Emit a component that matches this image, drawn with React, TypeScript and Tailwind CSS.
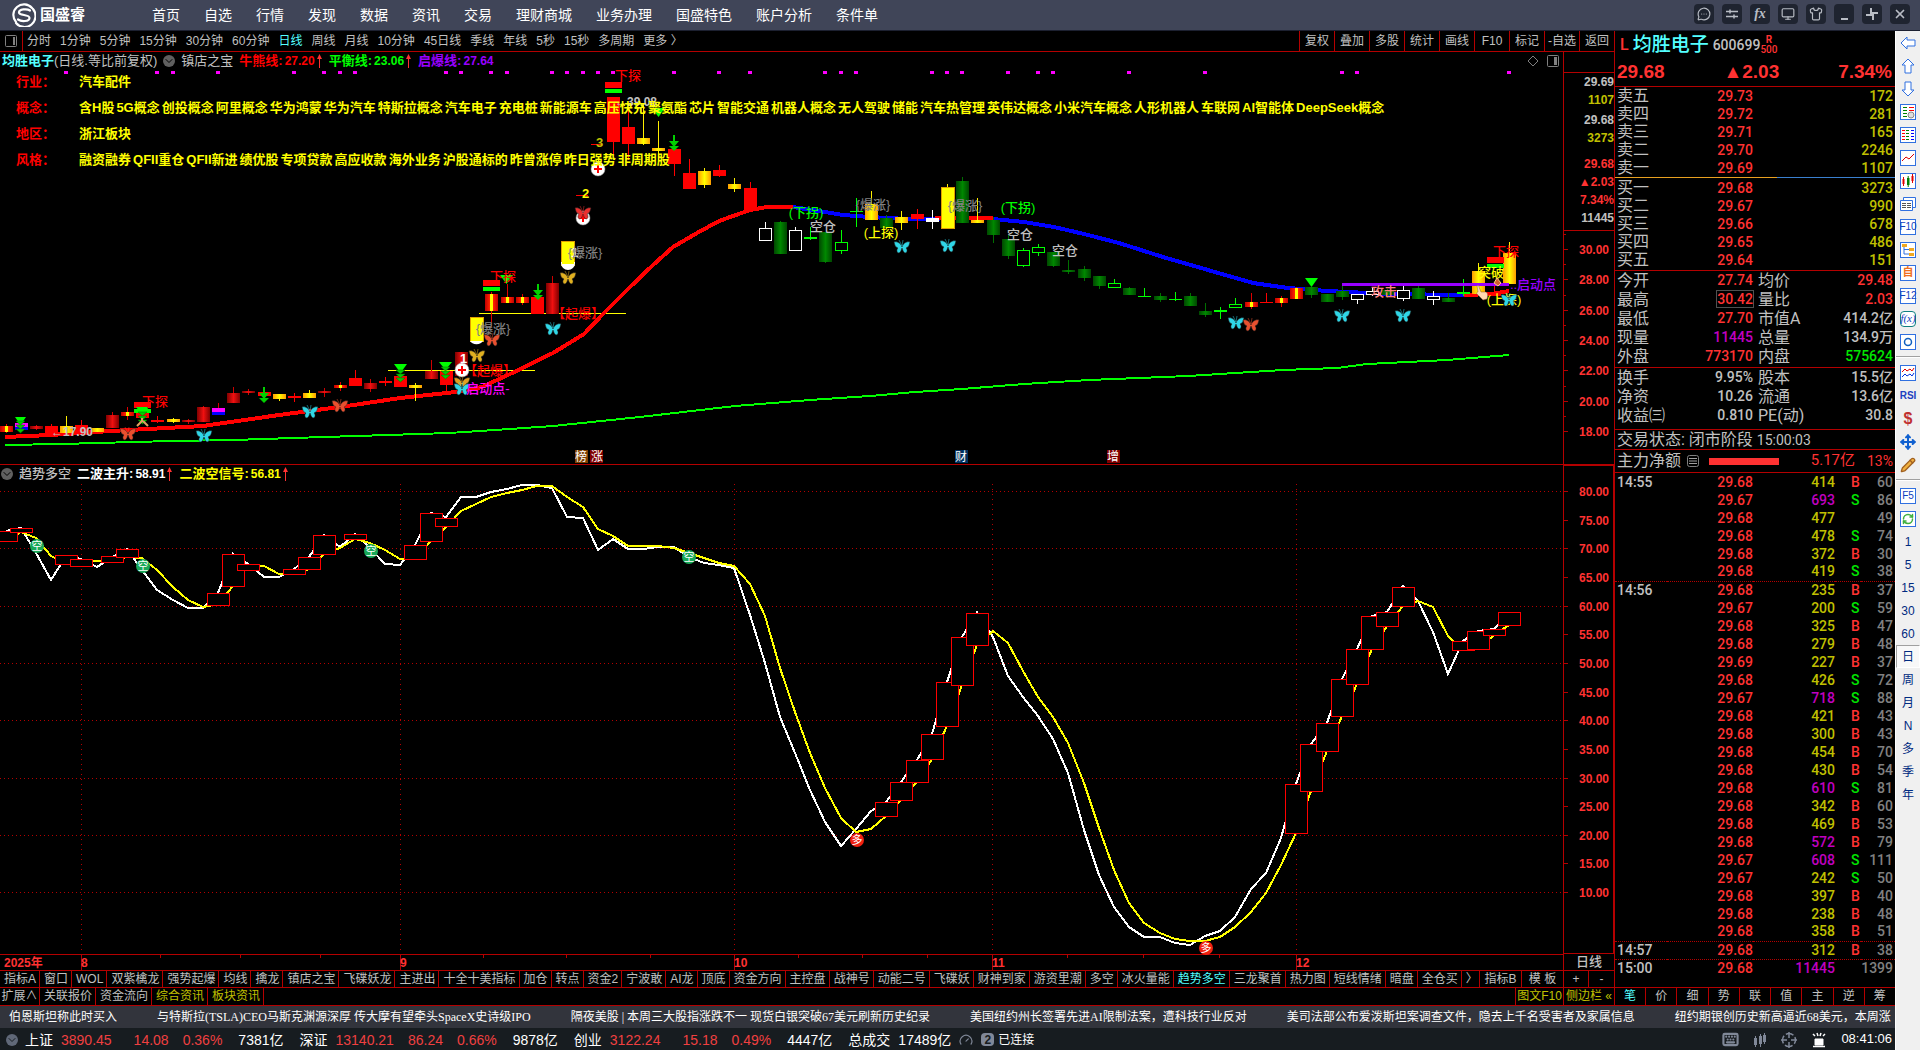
import React, { useState } from "react";
import clsx from "clsx";
import { ChevronDown, MessageCircleMore, Monitor, Shirt, X, Keyboard, Gauge, RefreshCw, Move, Pencil } from "lucide-react";

type CandleKind = "r" | "d" | "y" | "b" | "s" | "g" | "G" | "h" | "w" | "W" | "m";
// index, kind, high, body top, body bottom, low
type Candle = [number, CandleKind, number, number, number, number];

interface Tick {
  time?: string;
  price: string;
  vol: string;
  side: string;
  count: string;
  big?: boolean;
}

interface Note {
  x: number;
  y: number;
  text: string;
  color: string;
}

const STEP = 15.185;
const px = (i: number) => Math.round(5.5 + i * STEP);

const menu = ["首页", "自选", "行情", "发现", "数据", "资讯", "交易", "理财商城", "业务办理", "国盛特色", "账户分析", "条件单"];
const periods = ["分时", "1分钟", "5分钟", "15分钟", "30分钟", "60分钟", "日线", "周线", "月线", "10分钟", "45日线", "季线", "年线", "5秒", "15秒", "多周期", "更多 〉"];
const chartTools = ["复权", "叠加", "多股", "统计", "画线", "F10", "标记", "-自选", "返回"];
const indicators = ["指标A", "窗口", "WOL", "双紫檎龙", "强势起爆", "均线", "擒龙", "镇店之宝", "飞碟妖龙", "主进出", "十全十美指标", "加仓", "转点", "资金2", "宁波敢", "AI龙", "顶底", "资金方向", "主控盘", "战神号", "动能二号", "飞碟妖", "财神到家", "游资里潮", "多空", "冰火量能", "趋势多空", "三龙聚首", "热力图", "短线情绪", "暗盘", "全仓买", "〉"];
const panelTabs = ["笔", "价", "细", "势", "联", "值", "主", "逆", "筹"];

const facts = [
  { label: "行业：", value: "汽车配件" },
  { label: "概念：", value: "含H股 5G概念 创投概念 阿里概念 华为鸿蒙 华为汽车 特斯拉概念 汽车电子 充电桩 新能源车 高压快充 聚氨酯 芯片 智能交通 机器人概念 无人驾驶 储能 汽车热管理 英伟达概念 小米汽车概念 人形机器人 车联网 AI智能体 DeepSeek概念" },
  { label: "地区：", value: "浙江板块" },
  { label: "风格：", value: "融资融券 QFII重仓 QFII新进 绩优股 专项贷款 高应收款 海外业务 沪股通标的 昨曾涨停 昨日强势 非周期股" },
];

const news = [
  "伯恩斯坦称此时买入",
  "与特斯拉(TSLA)CEO马斯克渊源深厚 传大摩有望牵头SpaceX史诗级IPO",
  "隔夜美股 | 本周三大股指涨跌不一 现货白银突破67美元刷新历史纪录",
  "美国纽约州长签署先进AI限制法案，遭科技行业反对",
  "美司法部公布爱泼斯坦案调查文件，隐去上千名受害者及家属信息",
  "纽约期银创历史新高逼近68美元，本周涨",
];

const asks = [["卖五", "29.73", "172"], ["卖四", "29.72", "281"], ["卖三", "29.71", "165"], ["卖二", "29.70", "2246"], ["卖一", "29.69", "1107"]];
const bids = [["买一", "29.68", "3273"], ["买二", "29.67", "990"], ["买三", "29.66", "678"], ["买四", "29.65", "486"], ["买五", "29.64", "151"]];

const RED = "text-[#ff3232]";
const GRAY = "text-[#c0c0c0]";
const PUR = "text-[#c000c0]";

const stats = [
  ["今开", "27.74", RED, "均价", "29.48", RED],
  ["最高", "30.42", RED, "量比", "2.03", RED],
  ["最低", "27.70", RED, "市值A", "414.2亿", GRAY],
  ["现量", "11445", PUR, "总量", "134.9万", GRAY],
  ["外盘", "773170", RED, "内盘", "575624", "text-[#00e600]"],
];
const stats2 = [
  ["换手", "9.95%", GRAY, "股本", "15.5亿", GRAY],
  ["净资", "10.26", GRAY, "流通", "13.6亿", GRAY],
  ["收益㈢", "0.810", GRAY, "PE(动)", "30.8", GRAY],
];

const ticks: Tick[] = [
  { time: "14:55", price: "29.68", vol: "414", side: "B", count: "60" },
  { price: "29.67", vol: "693", side: "S", count: "86", big: true },
  { price: "29.68", vol: "477", side: "", count: "49" },
  { price: "29.68", vol: "478", side: "S", count: "74" },
  { price: "29.68", vol: "372", side: "B", count: "30" },
  { price: "29.68", vol: "419", side: "S", count: "38" },
  { time: "14:56", price: "29.68", vol: "235", side: "B", count: "37" },
  { price: "29.67", vol: "200", side: "S", count: "59" },
  { price: "29.68", vol: "325", side: "B", count: "47" },
  { price: "29.68", vol: "279", side: "B", count: "48" },
  { price: "29.69", vol: "227", side: "B", count: "37" },
  { price: "29.68", vol: "426", side: "S", count: "72" },
  { price: "29.67", vol: "718", side: "S", count: "88", big: true },
  { price: "29.68", vol: "421", side: "B", count: "43" },
  { price: "29.68", vol: "300", side: "B", count: "43" },
  { price: "29.68", vol: "454", side: "B", count: "70" },
  { price: "29.68", vol: "430", side: "B", count: "54" },
  { price: "29.68", vol: "610", side: "S", count: "81", big: true },
  { price: "29.68", vol: "342", side: "B", count: "60" },
  { price: "29.68", vol: "469", side: "B", count: "53" },
  { price: "29.68", vol: "572", side: "B", count: "79", big: true },
  { price: "29.67", vol: "608", side: "S", count: "111", big: true },
  { price: "29.67", vol: "242", side: "S", count: "50" },
  { price: "29.68", vol: "397", side: "B", count: "40" },
  { price: "29.68", vol: "238", side: "B", count: "48" },
  { price: "29.68", vol: "358", side: "B", count: "51" },
  { time: "14:57", price: "29.68", vol: "312", side: "B", count: "38" },
  { time: "15:00", price: "29.68", vol: "11445", side: "", count: "1399", big: true },
];

const indexes = [
  { name: "上证", value: "3890.45", diff: "14.08", pct: "0.36%", amount: "7381亿" },
  { name: "深证", value: "13140.21", diff: "86.24", pct: "0.66%", amount: "9878亿" },
  { name: "创业", value: "3122.24", diff: "15.18", pct: "0.49%", amount: "4447亿" },
];

const candles: Candle[] = [
  [0, "s", 424, 426, 432, 433], [1, "m", 423, 423, 430, 430], [2, "d", 425, 426, 429, 430], [3, "r", 424, 426, 433, 433],
  [4, "y", 416, 426, 433, 433], [5, "r", 420, 425, 432, 432], [6, "y", 428, 428, 432, 432], [7, "d", 412, 415, 428, 428],
  [8, "s", 407, 412, 416, 420], [9, "r", 410, 410, 418, 418], [10, "r", 416, 420, 422, 423], [11, "y", 418, 419, 422, 423],
  [12, "d", 419, 420, 422, 424], [13, "d", 406, 407, 422, 422], [14, "m", 403, 408, 415, 415], [15, "d", 387, 393, 403, 403],
  [16, "d", 389, 391, 393, 395], [17, "r", 387, 392, 396, 400], [18, "y", 394, 394, 399, 401], [19, "r", 393, 396, 398, 402],
  [20, "y", 390, 393, 398, 398], [21, "d", 388, 391, 393, 397], [22, "s", 382, 385, 388, 391], [23, "r", 370, 378, 386, 386],
  [24, "d", 379, 383, 389, 392], [25, "r", 377, 381, 383, 386], [26, "r", 376, 376, 387, 387], [27, "y", 383, 385, 388, 401],
  [28, "d", 360, 371, 379, 379], [29, "r", 371, 371, 385, 393], [30, "d", 352, 352, 376, 376], [31, "b", 317, 317, 341, 344],
  [32, "s", 292, 294, 311, 327], [33, "s", 284, 297, 303, 303], [34, "s", 294, 297, 303, 305], [35, "r", 297, 297, 314, 314],
  [36, "d", 276, 283, 314, 314], [37, "b", 241, 241, 265, 265], [40, "r", 97, 97, 142, 157], [41, "r", 110, 127, 144, 160],
  [42, "y", 103, 138, 144, 145], [43, "y", 121, 148, 151, 160], [44, "r", 149, 149, 164, 176], [45, "r", 159, 173, 189, 189],
  [46, "y", 168, 171, 185, 188], [47, "r", 165, 170, 176, 177], [48, "y", 178, 184, 189, 192], [49, "r", 182, 188, 210, 210],
  [50, "w", 222, 228, 240, 241], [51, "g", 221, 222, 254, 254], [52, "w", 227, 230, 250, 250], [53, "G", 227, 237, 239, 240],
  [54, "g", 232, 232, 262, 263], [55, "h", 230, 242, 250, 254], [56, "G", 198, 211, 212, 227], [57, "y", 191, 204, 220, 220],
  [58, "g", 215, 218, 228, 228], [59, "y", 211, 217, 223, 230], [60, "r", 209, 214, 219, 229], [61, "W", 210, 218, 222, 229],
  [62, "b", 184, 187, 228, 229], [63, "g", 177, 181, 223, 223], [64, "y", 198, 220, 223, 223], [65, "g", 217, 220, 235, 243],
  [66, "g", 235, 239, 256, 259], [67, "h", 248, 250, 265, 267], [68, "h", 244, 247, 252, 256], [69, "g", 252, 252, 266, 267],
  [70, "g", 260, 270, 272, 274], [71, "g", 266, 269, 278, 281], [72, "g", 276, 276, 286, 289], [73, "h", 279, 283, 287, 288],
  [74, "g", 287, 288, 295, 295], [75, "G", 288, 296, 297, 297], [76, "g", 293, 296, 300, 302], [77, "G", 292, 299, 300, 301],
  [78, "g", 293, 296, 306, 306], [79, "g", 303, 311, 315, 317], [80, "G", 307, 310, 312, 319], [81, "h", 298, 304, 307, 307],
  [82, "s", 293, 302, 307, 309], [83, "r", 293, 302, 303, 303], [84, "s", 296, 298, 303, 307], [85, "s", 287, 288, 299, 299],
  [86, "g", 287, 287, 295, 298], [87, "g", 294, 294, 302, 302], [88, "g", 286, 291, 297, 300], [89, "w", 294, 294, 299, 304],
  [90, "w", 288, 291, 294, 296], [91, "g", 289, 290, 295, 298], [92, "w", 286, 290, 298, 301], [93, "g", 286, 288, 299, 299],
  [94, "w", 291, 296, 299, 305], [95, "g", 293, 298, 302, 302], [96, "G", 279, 292, 294, 296], [97, "y", 263, 271, 294, 294],
  [98, "r", 286, 293, 296, 296], [99, "y", 242, 253, 284, 284],
];

const magentaDots = [4, 10, 11, 14, 19, 21, 22, 23, 29, 30, 32, 33, 36, 37, 38, 39, 40, 44, 47, 49, 54, 55, 56, 61, 62, 63, 66, 68, 69, 74, 79, 88, 89, 99];

const butterflies = [
  { x: 128, y: 434, c: "#e8502f" }, { x: 204, y: 436, c: "#2fd6e6" }, { x: 310, y: 412, c: "#2fd6e6" }, { x: 340, y: 406, c: "#e8502f" },
  { x: 462, y: 383, c: "#e0a020" }, { x: 462, y: 389, c: "#2fd6e6" }, { x: 477, y: 356, c: "#e0b020" }, { x: 492, y: 340, c: "#e8502f" },
  { x: 553, y: 329, c: "#2fd6e6" }, { x: 568, y: 278, c: "#e0b020" }, { x: 902, y: 247, c: "#2fd6e6" }, { x: 948, y: 246, c: "#2fd6e6" },
  { x: 1236, y: 323, c: "#2fd6e6" }, { x: 1251, y: 325, c: "#e8502f" }, { x: 1342, y: 316, c: "#2fd6e6" }, { x: 1403, y: 316, c: "#2fd6e6" },
];

const notes: Note[] = [
  { x: 155, y: 401, text: "下探", color: "#ff0000" },
  { x: 490, y: 370, text: "【起爆】", color: "#ff0000" },
  { x: 578, y: 313, text: "【起爆】", color: "#ff0000" },
  { x: 488, y: 388, text: "启动点-", color: "#ff00ff" },
  { x: 493, y: 328, text: "{爆涨}", color: "#808080" },
  { x: 585, y: 252, text: "{爆涨}", color: "#808080" },
  { x: 503, y: 276, text: "下探", color: "#ff0000" },
  { x: 806, y: 212, text: "(下拐)", color: "#00ff00" },
  { x: 823, y: 226, text: "空仓", color: "#c0c0c0" },
  { x: 873, y: 204, text: "{爆涨}", color: "#808080" },
  { x: 881, y: 232, text: "(上探)", color: "#ffff00" },
  { x: 965, y: 205, text: "{爆涨}", color: "#808080" },
  { x: 1018, y: 207, text: "(下拐)", color: "#00ff00" },
  { x: 1020, y: 234, text: "空仓", color: "#c0c0c0" },
  { x: 1065, y: 250, text: "空仓", color: "#c0c0c0" },
  { x: 1384, y: 291, text: "攻击", color: "#ff8080" },
  { x: 1506, y: 251, text: "下探", color: "#ff0000" },
  { x: 1491, y: 272, text: "突破", color: "#ffff00" },
  { x: 1533, y: 284, text: "..启动点", color: "#9900ff" },
  { x: 1504, y: 299, text: "(上探)", color: "#ffff00" },
];

const whiteLine = [531, 528, 553, 580, 556, 559, 567, 557, 549, 570, 590, 600, 608, 608, 593, 554, 564, 577, 577, 569, 557, 535, 547, 534, 548, 564, 565, 545, 513, 517, 497, 497, 492, 489, 485, 485, 488, 517, 518, 550, 539, 549, 549, 547, 547, 557, 563, 565, 568, 615, 663, 717, 753, 790, 822, 846, 829, 811, 802, 782, 760, 734, 682, 637, 612, 637, 676, 697, 716, 739, 773, 830, 875, 907, 927, 937, 937, 943, 945, 936, 931, 917, 889, 873, 838, 784, 744, 723, 679, 649, 616, 612, 586, 601, 632, 674, 641, 631, 629, 612];
const yellowLine = [541, 532, 538, 556, 564, 562, 561, 561, 557, 558, 570, 587, 600, 607, 604, 586, 566, 566, 574, 574, 569, 554, 548, 539, 543, 550, 559, 559, 541, 527, 511, 504, 497, 493, 490, 486, 486, 497, 507, 529, 536, 546, 546, 546, 548, 553, 558, 563, 566, 584, 616, 668, 712, 753, 788, 818, 832, 829, 816, 800, 782, 759, 726, 685, 645, 631, 643, 671, 697, 717, 743, 783, 828, 870, 903, 923, 933, 939, 941, 941, 937, 927, 912, 893, 865, 833, 791, 751, 716, 684, 649, 626, 606, 601, 607, 636, 650, 649, 635, 625];
const boxes = [[0, 531, 541], [1, 528, 532], [4, 555, 564], [5, 559, 566], [7, 556, 562], [8, 549, 557], [14, 593, 605], [15, 554, 586], [16, 564, 570], [19, 569, 574], [20, 557, 569], [21, 535, 554], [23, 534, 539], [27, 545, 559], [28, 513, 541], [29, 518, 526], [58, 802, 816], [59, 782, 800], [60, 760, 782], [61, 734, 759], [62, 682, 726], [63, 637, 685], [64, 613, 645], [85, 784, 833], [86, 744, 791], [87, 723, 751], [88, 679, 716], [89, 649, 684], [90, 616, 649], [91, 612, 626], [92, 587, 606], [96, 641, 650], [97, 631, 649], [98, 629, 635], [99, 612, 625]];

const months = [{ x: 81, label: "8" }, { x: 400, label: "9" }, { x: 734, label: "10" }, { x: 992, label: "11" }, { x: 1296, label: "12" }];
const minorTicks = [160, 240, 320, 483, 566, 650, 798, 862, 927, 1067, 1143, 1219];

const toLine = (ys: number[]) => ys.map((y, i) => `${px(i)},${y}`).join(" ");

function CandleShape({ c }: { c: Candle }) {
  const [i, kind, high, top, bottom, low] = c;
  const x = px(i);
  const left = x - 6;
  const h = Math.max(bottom - top, 1);
  const wick: Record<CandleKind, string> = { r: "#ff0000", d: "#d00000", y: "#ffee00", b: "#ffee00", s: "#e00000", g: "#007000", G: "#00ff00", h: "#00ff00", w: "#fff", W: "#fff", m: "#d00000" };
  return (
    <g>
      <rect x={x} y={high} width={1} height={low - high} fill={wick[kind]} />
      {kind === "r" && <rect x={left} y={top} width={13} height={h} fill="#ff0000" />}
      {kind === "d" && <rect x={left} y={top} width={13} height={h} fill="url(#darkRed)" />}
      {kind === "y" && <rect x={left} y={top} width={13} height={h} fill="url(#gold)" />}
      {kind === "b" && <rect x={left} y={top} width={13} height={h} fill="#ffff00" stroke="#e0a000" strokeWidth={1} />}
      {kind === "s" && <rect x={left} y={top} width={13} height={h} fill="url(#stripe)" />}
      {kind === "g" && <rect x={left} y={top} width={13} height={h} fill="url(#darkGreen)" />}
      {kind === "G" && <rect x={left} y={top} width={13} height={h} fill="#00ff00" />}
      {kind === "W" && <rect x={left} y={top} width={13} height={h} fill="#ffffff" />}
      {(kind === "h" || kind === "w") && (
        <rect x={left} y={top} width={12} height={h} fill="#000" stroke={kind === "h" ? "#00ff00" : "#ffffff"} />
      )}
      {kind === "m" && (
        <>
          <rect x={left} y={top} width={13} height={h} fill="#ff00ff" />
          <rect x={left} y={top + h * 0.6} width={13} height={h * 0.4} fill="#0000ff" />
        </>
      )}
    </g>
  );
}

function Butterfly({ x, y, c }: { x: number; y: number; c: string }) {
  return (
    <g transform={`translate(${x} ${y})`} stroke="#222" strokeWidth={0.5}>
      <path fill={c} d="M0 0C-1-3-4-6-8-5C-7-2-7 0-4 1C-6 3-5 6-3 6C-1 5-1 3 0 1C1 3 1 5 3 6C5 6 6 3 4 1C7 0 7-2 8-5C4-6 1-3 0 0Z" />
      <path fill="none" stroke={c} d="M0-1L-3-7M0-1L1-7" />
    </g>
  );
}

function DownArrows({ x, y }: { x: number; y: number }) {
  return (
    <g fill="#00d000" stroke="#007000" strokeWidth={0.5}>
      <path d={`M${x - 4} ${y}h9l-4.500 4z`} />
      <path d={`M${x - 4} ${y + 4}h9l-4.500 4z`} />
      <path d={`M${x - 4} ${y + 8}h9l-4.500 4z`} />
    </g>
  );
}

function StemArrow({ x, y }: { x: number; y: number }) {
  return (
    <g fill="#00d000">
      <rect x={x} y={y} width={2} height={8} />
      <path d={`M${x - 4} ${y + 6}h10l-5 6z`} />
      <path d={`M${x - 4} ${y + 11}h10l-5 5z`} />
    </g>
  );
}

function CrossBall({ x, y }: { x: number; y: number }) {
  return (
    <g>
      <circle cx={x} cy={y} r={7} fill="#fff" stroke="#999" strokeWidth={0.5} />
      <path d={`M${x - 4} ${y}h8M${x} ${y - 4}v8`} stroke="#ff0000" strokeWidth={2} />
    </g>
  );
}

function Hat({ x, y }: { x: number; y: number }) {
  return (
    <>
      <rect x={x - 8} y={y} width={17} height={6} fill="#ff0000" />
      <rect x={x - 8} y={y + 7} width={17} height={4} fill="#00ff00" />
    </>
  );
}

function PriceChart() {
  return (
    <svg viewBox="0 69 1563 395" className="block h-auto w-full" role="img" aria-label="均胜电子 日线">
      <defs>
        <linearGradient id="darkRed"><stop offset="0" stopColor="#800000" /><stop offset="0.5" stopColor="#f01010" /><stop offset="1" stopColor="#800000" /></linearGradient>
        <linearGradient id="gold"><stop offset="0" stopColor="#ff9c00" /><stop offset="0.5" stopColor="#ffff00" /><stop offset="1" stopColor="#ff9c00" /></linearGradient>
        <linearGradient id="darkGreen"><stop offset="0" stopColor="#004800" /><stop offset="0.5" stopColor="#008800" /><stop offset="1" stopColor="#004800" /></linearGradient>
        <linearGradient id="stripe"><stop offset="0" stopColor="#c00000" /><stop offset="0.35" stopColor="#ff2000" /><stop offset="0.36" stopColor="#ffff00" /><stop offset="0.64" stopColor="#ffff00" /><stop offset="0.65" stopColor="#ff2000" /><stop offset="1" stopColor="#c00000" /></linearGradient>
      </defs>
      <g shapeRendering="crispEdges">
        {magentaDots.map((i) => <rect key={i} x={px(i) - 2} y={71} width={4} height={3} fill="#ff00ff" />)}
        <rect x={388} y={370} width={147} height={1} fill="#ffff00" />
        <rect x={479} y={313} width={147} height={1} fill="#ffff00" />
        <polyline fill="none" stroke="#00ff00" strokeWidth={2} points="5,445 61,444 171,441 233,440 324,437 388,435 449,433 510,429 553,426 640,417 735,406 810,400 840,398 870,396 915,392 962,389 1024,384 1089,380 1188,376 1283,370 1337,368 1367,364 1447,360 1509,355" />
        <g fill="none" strokeWidth={4}>
          <polyline stroke="#ff0000" points="5,437 51,435 111,431 203,426 279,415 347,406 400,398 456,392 482,387 508,375 553,353 584,334 603,314 627,290 653,265 673,247 697,233 719,221 750,210 767,207 793,207" />
          <polyline stroke="#0000ff" points="793,207 825,212 843,215 870,217 907,219 940,219" />
          <polyline stroke="#ff0000" points="935,218 993,218" />
          <polyline stroke="#0000ff" points="993,219 1024,222 1054,227 1084,234 1119,243 1163,257 1208,270 1253,283 1288,288 1328,291 1387,294 1464,295" />
          <polyline stroke="#ff0000" points="1464,295 1492,294 1509,291" />
        </g>
        {candles.map((c) => <CandleShape key={c[0]} c={c} />)}
        <rect x={1342} y={283} width={167} height={3} fill="#9900ff" />
        <rect x={576} y={195} width={12} height={1} fill="#ff0000" />
        <rect x={591} y={144} width={12} height={1} fill="#ff0000" />
      </g>

      <CrossBall x={462} y={370} />
      <path d="M470 341a7 5 0 0 0 13 0z" fill="#fff" />
      <path d="M561 263a7 7 0 0 0 14 0v-1h-14z" fill="#fff" />
      <rect x={562} y={242} width={12} height={22} fill="#ffff00" />
      <text x={571} y={257} fill="#fff" fontSize={13} fontWeight={700}>1</text>
      <CrossBall x={583} y={218} />
      <Butterfly x={583} y={213} c="#e8302f" />
      <CrossBall x={598} y={169} />
      <Hat x={142} y={402} />
      <Hat x={491} y={280} />
      <Hat x={613} y={82} />
      <Hat x={1495} y={257} />

      <g fill="#00ff00">
        <path d="M15 417h11l-5.500 8z" />
        <path d="M136 407h13l-6.500 8z" />
        <path d="M394 364h13l-6.500 9z" />
        <path d="M439 362h13l-6.500 8z" />
        <path d="M500 275h13l-6.500 9z" />
        <path d="M652 108h13l-6.500 9z" />
        <path d="M1305 278h13l-6.500 9z" />
      </g>
      <DownArrows x={20} y={421} />
      <DownArrows x={142} y={412} />
      <DownArrows x={400} y={370} />
      <DownArrows x={445} y={367} />
      <StemArrow x={263} y={387} />
      <StemArrow x={537} y={284} />
      <StemArrow x={673} y={135} />
      <path d="M142 421l-5 5M143 421l5 5M142 418v4" stroke="#e0a060" strokeWidth={2} />

      {butterflies.map((b) => <Butterfly key={`${b.x}-${b.y}`} {...b} />)}

      <g fontSize={13} fontWeight={500} textAnchor="middle" dominantBaseline="central">
        {notes.map((n) => <text key={`${n.x}-${n.y}`} x={n.x} y={n.y} fill={n.color}>{n.text}</text>)}
        <text x={628} y={75} fill="#ff0000">下探</text>
      </g>
      <g fontSize={12} fontWeight={700} dominantBaseline="central">
        <text x={51} y={432} fill="#c0c0c0">←17.90</text>
        <text x={615} y={102} fill="#c0c0c0">←39.08</text>
        <text x={460} y={358} fill="#fff" fontSize={13}>1</text>
        <text x={582} y={193} fill="#ffff00" fontSize={13}>2</text>
        <text x={596} y={142} fill="#c0c000" fontSize={13}>3</text>
      </g>
      <path d="M1494 283l3-5 4 5-3 3z" fill="#d06030" stroke="#ffcc80" />
      <Butterfly x={1509} y={300} c="#2fd6e6" />
      {/* pointing hand */}
      <path d="M1477 286c1-1 2 0 2 1l2 5 5 0c2 1 2 4 1 7l-4 1-6-6c-1-1 0-2 1-2z" fill="#ffd8b0" stroke="#8a5a30" strokeWidth={0.5} />

      <g fontSize={12} textAnchor="middle" dominantBaseline="central">
        <rect x={575} y={450} width={13} height={13} fill="#804000" /><text x={581} y={457} fill="#fff">榜</text>
        <rect x={590} y={450} width={13} height={13} fill="#800000" /><text x={597} y={457} fill="#fff">涨</text>
        <rect x={955} y={450} width={13} height={13} fill="#003060" /><text x={961} y={457} fill="#fff">财</text>
        <rect x={1107} y={450} width={13} height={13} fill="#800000" /><text x={1113} y={457} fill="#fff">增</text>
      </g>
    </svg>
  );
}

function TrendChart() {
  const grid = [80, 70, 60, 50, 40, 30, 20, 10];
  return (
    <svg viewBox="0 482 1563 488" className="block h-auto w-full" role="img" aria-label="趋势多空">
      <g shapeRendering="crispEdges" fill="none">
        {grid.map((g) => {
          const y = Math.round(491 + (80 - g) * 5.73) + 0.5;
          return <line key={g} x1={0} x2={1563} y1={y} y2={y} stroke="#b40000" strokeDasharray="1 3" />;
        })}
        {months.map((m) => <line key={m.x} x1={m.x + 0.5} x2={m.x + 0.5} y1={484} y2={954} stroke="#b40000" strokeDasharray="1 4" />)}
        <polyline points={toLine(whiteLine)} stroke="#ffffff" strokeWidth={2} />
        <polyline points={toLine(yellowLine)} stroke="#ffff00" strokeWidth={2} />
        {boxes.map(([i, top, bottom]) => (
          <rect key={i} x={px(i) - 10.5} y={top + 0.5} width={22} height={bottom - top} fill="#000" stroke="#ff0000" />
        ))}
        <rect x={0} y={954} width={1563} height={1} fill="#b40000" />
        {minorTicks.map((x) => <rect key={x} x={x} y={955} width={1} height={3} fill="#b40000" />)}
        {months.map((m) => <rect key={m.x} x={m.x} y={955} width={1} height={15} fill="#b40000" />)}
      </g>
      <g fontSize={11} textAnchor="middle" dominantBaseline="central" fill="#fff">
        {[[37, 546], [143, 566], [371, 551], [689, 557]].map(([x, y]) => (
          <g key={x}><circle cx={x} cy={y} r={7} fill="#18a858" /><text x={x} y={y}>空</text></g>
        ))}
        {[[857, 840], [1206, 948]].map(([x, y]) => (
          <g key={x}><circle cx={x} cy={y} r={7} fill="#f02010" /><text x={x} y={y}>多</text></g>
        ))}
      </g>
      <g fontSize={12} fontWeight={700} fill="#ff3232" dominantBaseline="central">
        <text x={4} y={963}>2025年</text>
        {months.map((m) => <text key={m.x} x={m.x} y={963}>{m.label}</text>)}
      </g>
    </svg>
  );
}

function PriceAxis() {
  const labels = ["30.00", "28.00", "26.00", "24.00", "22.00", "20.00", "18.00"];
  return (
    <svg viewBox="0 231 50 233" className="block h-auto w-full">
      {labels.map((l, i) => {
        const y = Math.round(249 + i * 30.3);
        return (
          <g key={l} fill="#b40000">
            <rect x={0} y={y} width={4} height={1} />
            <rect x={0} y={y - 15} width={2} height={1} />
            <text x={45} y={y + 1} fill="#ff3232" fontSize={12} fontWeight={700} textAnchor="end" dominantBaseline="central">{l}</text>
          </g>
        );
      })}
    </svg>
  );
}

function TrendAxis() {
  const labels = Array.from({ length: 15 }, (_, i) => 80 - i * 5);
  return (
    <svg viewBox="0 466 49 487" className="block h-auto w-full">
      {labels.map((l, i) => {
        const y = Math.round(491 + i * 28.65);
        return (
          <g key={l} fill="#b40000">
            <rect x={0} y={y} width={4} height={1} />
            <text x={45} y={y + 1} fill="#ff3232" fontSize={12} fontWeight={700} textAnchor="end" dominantBaseline="central">{l}.00</text>
          </g>
        );
      })}
    </svg>
  );
}

function Reading({ label, value, up, className }: { label: string; value: string; up?: boolean; className: string }) {
  return (
    <span className={clsx("flex items-center text-[13px]", className)}>
      {label}:<span className="ml-[2px] text-xs">{value}</span>
      {up && <svg viewBox="0 0 7 14" className="ml-px h-[14px] w-[7px]"><path d="M3 1h1v13H3zM3.500 0L6 5H1z" fill="#ff3232" /></svg>}
    </span>
  );
}

function Header() {
  const icon = "size-[14px] text-[#b8bcc4]";
  const controls = [
    { name: "消息", el: <MessageCircleMore className={icon} /> },
    { name: "设置", el: <svg viewBox="0 0 14 14" className={icon} stroke="currentColor" strokeWidth="1.5"><path d="M1 4.500h12M1 9.500h12M5 2.500v4M9 7.500v4" /></svg> },
    { name: "公式", el: <span className="font-['Liberation_Serif',serif] text-sm font-bold italic leading-none text-[#b8bcc4]">fx</span> },
    { name: "屏幕", el: <Monitor className={icon} /> },
    { name: "皮肤", el: <Shirt className={icon} /> },
    { name: "最小化", el: <svg viewBox="0 0 14 14" className={icon} stroke="currentColor" strokeWidth="2"><path d="M4 12h7" /></svg> },
    { name: "还原", el: <svg viewBox="0 0 14 14" className={icon} stroke="currentColor" strokeWidth="2" fill="none"><path d="M6 1v7H1M8 13V6h5" /></svg> },
    { name: "关闭", el: <X className={icon} strokeWidth={3} /> },
  ];
  return (
    <header className="flex h-[31px] items-center border-b border-[#1c2030] bg-[#404558] pl-3 pr-[10px]">
      <div className="flex w-[140px] items-center gap-1">
        <svg viewBox="0 0 24 24" className="size-6" fill="none" stroke="#fff" strokeWidth="2.200" strokeLinecap="round">
          <path d="M20 5A10.500 10.500 0 0 0 4 19" />
          <path d="M4 20A10.500 10.500 0 0 0 21 6" />
          <path d="M18 7.500C15 5.500 7 6 7 9.500c0 3.500 10.500 1.500 10.500 5.500 0 3.500-8 4-11.500 1.500" />
        </svg>
        <span className="text-[15px] font-bold text-white">国盛睿</span>
      </div>
      <nav className="flex gap-6 text-sm text-white">
        {menu.map((m) => <a key={m} href="#" className="whitespace-nowrap">{m}</a>)}
      </nav>
      <div className="ml-auto flex gap-2 pb-[3px]">
        {controls.map((c) => (
          <button key={c.name} aria-label={c.name} className="flex size-5 items-center justify-center rounded bg-[#1f2430]">{c.el}</button>
        ))}
      </div>
    </header>
  );
}

function StatRows({ rows }: { rows: string[][] }) {
  return (
    <table className="w-full table-fixed">
      <tbody>
        {rows.map((r) => (
          <tr key={r[0]} className="h-[19px] leading-[19px]">
            <th scope="row" className="w-[52px] whitespace-nowrap p-0 pl-[2px] text-left text-base font-normal leading-[19px] text-[#c0c0c0]">{r[0]}</th>
            <td className={clsx("w-[86px] p-0 text-right font-medium", r[2])}>
              <span className={clsx(r[0] === "最高" && "outline outline-[#505050]")}>{r[1]}</span>
            </td>
            <th scope="row" className="w-[54px] whitespace-nowrap p-0 pl-[5px] text-left text-base font-normal leading-[19px] text-[#c0c0c0]">{r[3]}</th>
            <td className={clsx("p-0 pr-[2px] text-right font-medium", r[5])}>{r[4]}</td>
          </tr>
        ))}
      </tbody>
    </table>
  );
}

function BookRows({ rows }: { rows: string[][] }) {
  return (
    <table className="w-full table-fixed">
      <tbody>
        {rows.map(([name, price, vol]) => (
          <tr key={name} className="h-[18px] leading-[18px]">
            <th scope="row" className="w-[52px] p-0 pl-[2px] text-left text-base font-normal leading-[18px] text-[#c0c0c0]">{name}</th>
            <td className="w-[86px] p-0 text-right font-medium text-[#ff3232]">{price}</td>
            <td className="p-0 pr-[2px] text-right font-medium text-[#c0c000]">{vol}</td>
          </tr>
        ))}
      </tbody>
    </table>
  );
}

function QuotePanel() {
  const [tab, setTab] = useState("笔");
  return (
    <aside className="flex w-[281px] shrink-0 flex-col border-l border-[#b40000] font-['Roboto','Noto_Sans_CJK_SC',sans-serif] text-sm">
      <div className="border-b border-[#b40000]">
        <div className="flex h-[27px] items-center pl-[5px]">
          <span className="mr-1 text-base font-medium text-[#ff3232]">L</span>
          <h1 className="text-[19px] font-medium leading-[27px] text-[#54ffff]">均胜电子</h1>
          <span className="ml-1 font-medium text-[#c0c0c0]">600699</span>
          <span className="flex flex-col items-center text-[10px] font-medium leading-[10px] text-[#ff3232]"><b>R</b><span>500</span></span>
        </div>
        <div className="flex h-7 items-center justify-between pl-[2px] pr-[3px] font-['Liberation_Sans',sans-serif] text-[19px] font-bold text-[#ff3232]">
          <span>29.68</span>
          <span>▲2.03</span>
          <span>7.34%</span>
        </div>
      </div>
      <div className="border-b border-[#b40000] pb-px">
        <BookRows rows={asks} />
        <div className="flex h-[2px]"><div className="w-[58%] border-t border-[#e8a020]" /><div className="flex-1 border-t border-[#3a80d0]" /></div>
        <BookRows rows={bids} />
      </div>
      <div className="border-b border-[#b40000] pb-px"><StatRows rows={stats} /></div>
      <div className="border-b border-[#b40000] pb-1"><StatRows rows={stats2} /></div>
      <div className="h-5 whitespace-nowrap border-b border-[#b40000] pl-[2px] leading-[19px] text-[#c0c0c0]">
        <span className="text-base leading-[19px]">交易状态: 闭市阶段 </span>15:00:03
      </div>
      <div className="flex h-[23px] items-center border-b border-[#b40000] pl-[2px] pr-[2px] text-[#ff3232]">
        <span className="text-base leading-[22px] text-[#c0c0c0]">主力净额</span>
        <svg viewBox="0 0 12 12" className="ml-[6px] size-3"><rect x="0.500" y="0.500" width="11" height="11" rx="2" fill="none" stroke="#808080" /><path d="M2 3.500h8M2 6h8M2 8.500h8" stroke="#a0a0a0" /></svg>
        <div className="ml-[10px] h-[7px] w-[70px] bg-[#ff3232]" />
        <span className="ml-auto mr-3 text-[15px]">5.17亿</span>
        <span>13%</span>
      </div>
      <table className="w-full table-fixed font-medium">
        <tbody>
          {ticks.map((t, i) => (
            <tr key={i} className={clsx("h-[18px] leading-[17px]", t.time && i > 0 && "border-t border-dotted border-[#b40000]")}>
              <td className="w-[52px] p-0 pl-[2px] text-[#c0c0c0]">{t.time}</td>
              <td className="w-[86px] p-0 text-right text-[#ff3232]">{t.price}</td>
              <td className={clsx("w-[82px] p-0 text-right", t.big ? "text-[#c000c0]" : "text-[#c0c000]")}>{t.vol}</td>
              <td className={clsx("w-[26px] p-0 pl-4 text-left", t.side === "S" ? "text-[#00e600]" : "text-[#ff3232]")}>{t.side}</td>
              <td className="p-0 pr-[2px] text-right text-[#808080]">{t.count}</td>
            </tr>
          ))}
        </tbody>
      </table>
      <div className="mt-auto flex h-[19px] border-y border-[#b40000] text-xs">
        {panelTabs.map((t) => (
          <button key={t} onClick={() => setTab(t)} className={clsx("flex-1 border-r border-[#b40000] leading-[17px] last:border-r-0", tab === t ? "text-[#54ffff]" : "text-[#c0c0c0]")}>{t}</button>
        ))}
      </div>
    </aside>
  );
}

function BoxIcon({ children }: { children: React.ReactNode }) {
  return <span className="flex size-4 items-center justify-center border border-[#3070e0] bg-white text-[10px] leading-none text-[#1040c0]">{children}</span>;
}

function Toolbar() {
  const art = "size-[14px]";
  const arrow = "M8 1l6 6h-3v8H5V7H2z";
  const first = [
    { name: "后退", el: <svg viewBox="0 0 16 16" className="size-[16px] -rotate-90" fill="#fff" stroke="#3070e0"><path d={arrow} /></svg> },
    { name: "上翻", el: <svg viewBox="0 0 16 16" className="size-[16px]" fill="#fff" stroke="#3070e0"><path d={arrow} /></svg> },
    { name: "下翻", el: <svg viewBox="0 0 16 16" className="size-[16px] rotate-180" fill="#fff" stroke="#3070e0"><path d={arrow} /></svg> },
    { name: "报价编辑", el: <BoxIcon><svg viewBox="0 0 14 14" className={art}><path d="M2 2.500h4M2 5.500h4M2 8.500h4M2 11.500h4" stroke="#008000" /><path d="M8 2.500h5M8 5.500h5" stroke="#f00" /><circle cx="10" cy="10" r="3" fill="#ddd" stroke="#888" /></svg></BoxIcon> },
    { name: "报价", el: <BoxIcon><svg viewBox="0 0 14 14" className={art} strokeDasharray="3 1"><path d="M1 2.500h4M1 5.500h4M1 8.500h4M1 11.500h4" stroke="#f00" /><path d="M5 2.500h4M5 5.500h4M5 8.500h4M5 11.500h4" stroke="#008000" /><path d="M10 2.500h4M10 5.500h4M10 8.500h4M10 11.500h4" stroke="#00f" /></svg></BoxIcon> },
    { name: "走势", el: <BoxIcon><svg viewBox="0 0 14 14" className={art} fill="none" stroke="#e00000"><path d="M1 10l4-4 3 2 5-5" /></svg></BoxIcon> },
    { name: "K线", el: <BoxIcon><svg viewBox="0 0 14 14" className={art}><path d="M1.500 5h2v5h-2zM10.500 2h2v5h-2z" fill="#e00000" /><path d="M6 4h2.500v7H6z" fill="#008000" /><path d="M2.500 3v9M11.500 0v9" stroke="#e00000" /><path d="M7.200 2v11" stroke="#008000" /></svg></BoxIcon> },
    { name: "多窗口", el: <svg viewBox="0 0 16 16" className="size-4" fill="#fff" stroke="#3070e0"><path d="M3.500 1.500h12v10h-12z" /><path d="M.5 4.500h12v10H.5z" /><path d="M2 7.500h4M7 7.500h4M2 9.500h4M7 9.500h4M2 11.500h4M7 11.500h4" stroke="#555" /></svg> },
    { name: "F10", el: <BoxIcon>F10</BoxIcon> },
    { name: "板块", el: <BoxIcon><svg viewBox="0 0 14 14" className={art}><path d="M3 2v9h6M3 6.500h6" fill="none" stroke="#3070e0" /><path d="M1 1h5v3H1zM8 5h5v3H8zM8 10h5v3H8z" fill="#f0a820" /></svg></BoxIcon> },
    { name: "自选股", el: <BoxIcon><span className="text-[11px] font-bold text-[#f07020]">自</span></BoxIcon> },
    { name: "F12", el: <BoxIcon>F12</BoxIcon> },
    { name: "函数", el: <span className="flex size-4 items-center justify-center rounded-sm border border-[#108080] bg-white font-['Liberation_Serif',serif] text-[11px] italic leading-none text-[#1040c0]">f(x)</span> },
    { name: "圆形", el: <BoxIcon><svg viewBox="0 0 14 14" className={art}><circle cx="7" cy="7" r="3.500" fill="none" stroke="#1060c0" strokeWidth="1.500" /></svg></BoxIcon> },
  ];
  const second = [
    { name: "指标", el: <BoxIcon><svg viewBox="0 0 14 14" className={art} fill="none"><path d="M1 6l3-3 2 2 3-2 2 2 2-3" stroke="#e00000" /><path d="M1 11l3-3 2 2 3-2 2 2 2-3" stroke="#0030e0" /></svg></BoxIcon> },
    { name: "RSI", el: <span className="text-[10px] font-bold text-[#2040c0]">RSI</span> },
    { name: "资金", el: <span className="text-base font-bold leading-none text-[#c03030]">$</span> },
    { name: "移动", el: <Move className="size-4 text-[#1060d0]" strokeWidth={3} /> },
    { name: "画笔", el: <Pencil className="size-4 text-[#a06020]" fill="#f0b040" /> },
  ];
  const third = [
    { name: "F5", el: <BoxIcon>F5</BoxIcon> },
    { name: "刷新", el: <BoxIcon><RefreshCw className="size-3 text-[#40b040]" strokeWidth={3} /></BoxIcon> },
  ];
  const cycles = ["1", "5", "15", "30", "60", "日", "周", "月", "N", "多", "季", "年"];
  const row = (b: { name: string; el: React.ReactNode }) => (
    <button key={b.name} aria-label={b.name} className="flex h-[23px] w-full items-center justify-center">{b.el}</button>
  );
  return (
    <nav className="w-[25px] shrink-0 border-l border-white bg-[#f0f0f0]" aria-label="工具栏">
      {first.map(row)}
      <div className="my-[3px] border-y border-[#a0a0a0] border-b-white" />
      {second.map(row)}
      <div className="my-[3px] border-y border-[#a0a0a0] border-b-white" />
      {third.map(row)}
      {cycles.map((c) => (
        <button key={c} className={clsx("flex h-[23px] w-full items-center justify-center text-xs text-[#002a80]", c === "日" && "border border-white border-l-[#a0a0a0] border-t-[#a0a0a0] bg-[#f8f8f8]")}>{c}</button>
      ))}
    </nav>
  );
}

export default function App() {
  const [period, setPeriod] = useState("日线");
  const [indicator, setIndicator] = useState("趋势多空");

  const cell = "shrink-0 whitespace-nowrap border-r border-[#b40000]";

  return (
    <div className="flex min-h-screen flex-col bg-black font-['Liberation_Sans','Noto_Sans_CJK_SC',sans-serif] text-xs">
      <Header />
      <div className="flex flex-1">
        <div className="flex min-w-0 flex-1 flex-col">
          <div className="flex flex-1">
            <main className="min-w-0 flex-1">
              {/* period switch */}
              <div className="flex h-[21px] items-center border-b border-[#b40000] text-[#c0c0c0]">
                <div className="flex h-5 w-[23px] items-center justify-center border-r border-[#b40000]">
                  <svg viewBox="0 0 12 12" className="size-3" fill="none" stroke="#808080"><rect x="0.500" y="0.500" width="11" height="11" rx="1" /><path d="M9 2v8" strokeWidth="2" /></svg>
                </div>
                <div className="flex gap-[9px] pl-1">
                  {periods.map((p) => (
                    <button key={p} onClick={() => setPeriod(p)} className={clsx("whitespace-nowrap", p === period && "text-[#54ffff]")}>{p}</button>
                  ))}
                </div>
                <div className="ml-auto flex">
                  {chartTools.map((t) => (
                    <button key={t} className="h-5 w-[35px] whitespace-nowrap border-l border-[#b40000] text-center">{t}</button>
                  ))}
                </div>
              </div>

              {/* price chart */}
              <div className="flex border-b border-[#b40000]">
                <section className="relative min-w-0 flex-1">
                  <div className="flex h-[17px] items-center gap-[6px] whitespace-nowrap pl-[2px] text-[13px] font-bold">
                    <span className="text-[#54ffff]">均胜电子<span className="font-normal text-[#c0c0c0]">(日线.等比前复权)</span></span>
                    <ChevronDown className="size-3 rounded-full bg-[#606060] text-black" />
                    <span className="font-normal text-[#c0c0c0]">镇店之宝</span>
                    <Reading label="牛熊线" value="27.20" up className="text-[#ff0000]" />
                    <Reading label="平衡线" value="23.06" up className="text-[#00ff00]" />
                    <Reading label="启爆线" value="27.64" className="text-[#9900ff]" />
                    <span className="ml-auto mr-1 flex items-center gap-2 text-[#808080]">
                      <svg viewBox="0 0 12 12" className="size-3" fill="none" stroke="currentColor"><path d="M6 1l5 5-5 5-5-5z" /></svg>
                      <svg viewBox="0 0 12 12" className="size-3" fill="none" stroke="currentColor"><rect x="0.500" y="0.500" width="11" height="11" rx="1" /><path d="M8.500 2v8" strokeWidth="3" /></svg>
                    </span>
                  </div>
                  <PriceChart />
                  <dl className="absolute left-4 top-[17px] text-[13px] font-bold">
                    {facts.map((f) => (
                      <div key={f.label} className="flex h-[26px] items-center whitespace-nowrap">
                        <dt className="w-[63px] text-[#ff0000]">{f.label}</dt>
                        <dd className="flex gap-[2px] text-[#ffff00]">
                          {f.value.split(" ").map((v) => <span key={v}>{v}</span>)}
                        </dd>
                      </div>
                    ))}
                  </dl>
                </section>
                <div className="w-[51px] shrink-0 border-l border-[#b40000] text-right font-bold text-[#ff3232]">
                  <div className="h-[21px] border-b border-[#b40000]" />
                  <div className="border-b border-[#b40000] pb-[3px] leading-[18px]">
                    <div className="text-[#c0c0c0]">29.69</div>
                    <div className="text-[#c0c000]">1107</div>
                    <div className="mt-[2px] text-[#c0c0c0]">29.68</div>
                    <div className="mb-2 text-[#c0c000]">3273</div>
                    <div>29.68</div>
                    <div>▲2.03</div>
                    <div>7.34%</div>
                    <div className="text-[#c0c0c0]">11445</div>
                  </div>
                  <PriceAxis />
                </div>
              </div>

              {/* trend chart */}
              <div className="flex border-b border-[#b40000]">
                <section className="min-w-0 flex-1">
                  <div className="flex h-[17px] items-center gap-[6px] whitespace-nowrap pl-px text-[13px] font-bold">
                    <ChevronDown className="size-3 rounded-full bg-[#606060] text-black" />
                    <span className="font-medium text-[#c0c0c0]">趋势多空</span>
                    <Reading label="二波主升" value="58.91" up className="text-white" />
                    <Reading label="二波空信号" value="56.81" up className="text-[#ffff00]" />
                  </div>
                  <TrendChart />
                </section>
                <div className="flex w-[51px] shrink-0 flex-col border-l border-[#b40000]">
                  <div className="border-b border-r border-t border-[#b40000]"><TrendAxis /></div>
                  <div className="flex-1 text-center text-[13px] font-medium leading-4 text-[#c0c0c0]">日线</div>
                </div>
              </div>

              {/* indicator tabs */}
              <div className="flex h-[17px] border-b border-[#b40000] leading-4 text-[#c0c0c0]">
                <div className="flex min-w-0 flex-1 overflow-hidden">
                  {indicators.map((t) => (
                    <button key={t} onClick={() => setIndicator(t)} className={clsx(cell, "pl-1 pr-[3px]", t === indicator && "text-[#54ffff]")}>{t}</button>
                  ))}
                </div>
                <button className={clsx(cell, "w-[43px] border-l")}>指标B</button>
                <button className={clsx(cell, "w-[42px]")}>模 板</button>
                <button className={clsx(cell, "w-[25px]")}>+</button>
                <button className="w-[25px] shrink-0">-</button>
              </div>
              <div className="flex h-[18px] border-b border-[#b40000] leading-[17px] text-[#c0c0c0]">
                <button className={clsx(cell, "w-10")}>扩展∧</button>
                <button className={clsx(cell, "pl-1 pr-[3px]")}>关联报价</button>
                <button className={clsx(cell, "pl-1 pr-[3px]")}>资金流向</button>
                <button className={clsx(cell, "pl-1 pr-[3px] text-[#c0c000]")}>综合资讯</button>
                <button className={clsx(cell, "pl-1 pr-[3px] text-[#c0c000]")}>板块资讯</button>
                <button className={clsx(cell, "ml-auto w-[49px] border-l text-[#c0c000]")}>图文F10</button>
                <button className="w-[50px] shrink-0 whitespace-nowrap text-[#c0c000]">侧边栏 «</button>
              </div>
            </main>
            <QuotePanel />
          </div>

          {/* news ticker */}
          <div className="flex h-[22px] items-center gap-10 overflow-hidden whitespace-nowrap bg-[#32343c] pl-[9px] font-['Liberation_Serif','Noto_Sans_CJK_SC',serif] text-white">
            {news.map((n) => <a key={n} href="#" className="shrink-0">{n}</a>)}
          </div>

          {/* index bar */}
          <footer className="flex h-[22px] items-center whitespace-nowrap bg-[#171c20] pl-[6px] pr-[3px] pt-px text-sm text-white">
            <ChevronDown className="size-3 rounded-full bg-[#606878] text-[#171c20]" />
            {indexes.map((i, n) => (
              <div key={i.name} className={clsx("flex", n === 0 ? "ml-[7px]" : "ml-4")}>
                <span>{i.name}</span>
                <span className="ml-2 text-[#f04040]">{i.value}</span>
                <span className={clsx("text-[#f04040]", n === 1 ? "ml-[14px]" : "ml-[22px]")}>{i.diff}</span>
                <span className="ml-[14px] text-[#f04040]">{i.pct}</span>
                <span className="ml-4">{i.amount}</span>
              </div>
            ))}
            <span className="ml-4">总成交</span>
            <span className="ml-2">17489亿</span>
            <Gauge className="ml-2 size-[14px] text-[#808898]" />
            <span className="ml-2 flex size-[13px] items-center justify-center rounded-sm bg-[#808898] text-xs font-bold text-[#171c20]">2</span>
            <span className="ml-1 text-xs">已连接</span>
            <div className="ml-auto flex items-center gap-[14px] text-[#808898]">
              <Keyboard className="size-[17px]" strokeWidth={3} />
              <svg viewBox="0 0 14 14" className="size-[14px]" fill="currentColor"><path d="M1 5h3v7H1zM6 3h3v8H6zM10 2h3v7h-3zM2 3h1v11H2zM7 1h1v13H7zM11 0h1v11h-1z" /></svg>
              <svg viewBox="0 0 16 16" className="size-4" fill="none" stroke="currentColor" strokeWidth="1.500"><circle cx="8" cy="8" r="6.500" strokeDasharray="8 2.200" strokeDashoffset="4" /><path d="M8 0v6M8 10v6M0 8h6M10 8h6" /></svg>
              <svg viewBox="0 0 16 16" className="size-4" fill="#fff" stroke="#fff"><path d="M4 7h8v6H4z" /><path d="M2 14.500h12M2 2l2 2M14 2l-2 2M6 1l1 3M10 1L9 4" fill="none" strokeWidth="1.500" /></svg>
              <time className="text-[13px] text-white">08:41:06</time>
            </div>
          </footer>
        </div>
        <Toolbar />
      </div>
    </div>
  );
}
